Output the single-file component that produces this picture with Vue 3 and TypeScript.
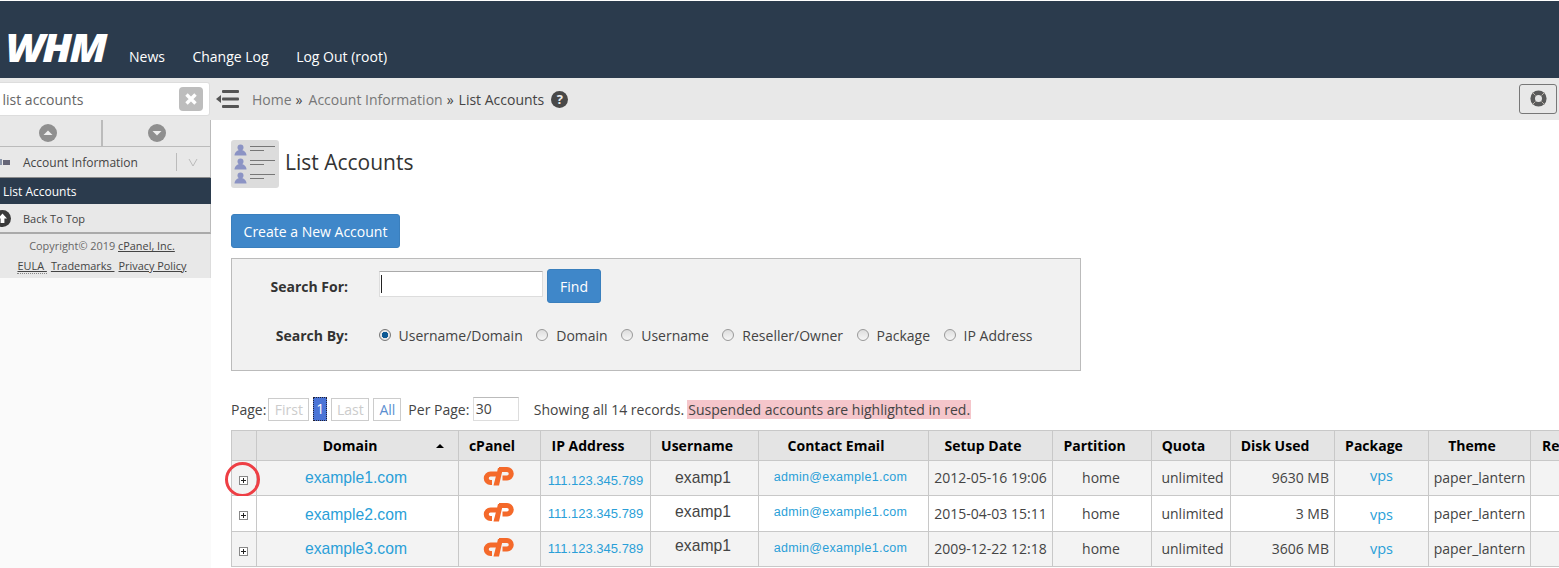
<script setup lang="ts">
interface Row {
  domain: string
  date: string
  disk: string
  h: number
  domainShift: number
  userShift: number
  ipShift: number
  pkgShift: number
}
const rows: Row[] = [
  { domain: 'example1.com', date: '2012-05-16 19:06', disk: '9630 MB', h: 35, domainShift: 0, userShift: -1, ipShift: 5, pkgShift: -6 },
  { domain: 'example2.com', date: '2015-04-03 15:11', disk: '3 MB', h: 36, domainShift: 3, userShift: -4, ipShift: 0, pkgShift: 2 },
  { domain: 'example3.com', date: '2009-12-22 12:18', disk: '3606 MB', h: 35, domainShift: 0, userShift: -6, ipShift: -1, pkgShift: -1 }
]
const widths = [25, 202, 82, 110, 108, 170, 124, 99, 79, 104, 94, 102, 70]
const tableWidth = widths.reduce((a, b) => a + b, 0)
const radios = ['Username/Domain', 'Domain', 'Username', 'Reseller/Owner', 'Package', 'IP Address']
function shift(n: number) {
  return n >= 0 ? { paddingTop: n + 'px' } : { paddingBottom: -n + 'px' }
}
</script>

<template>
  <div class="page">
    <header class="top">
      <div class="logo">WHM</div>
      <nav class="nav">
        <a>News</a>
        <a>Change Log</a>
        <a>Log Out (root)</a>
      </nav>
    </header>
    <div class="body">
      <aside class="side">
        <div class="side-search">
          <div class="search-box">
            <span>list accounts</span>
            <i class="clear">
              <svg width="14" height="14" viewBox="0 0 14 14"><path d="M2.5 2.5l9 9M11.5 2.5l-9 9" stroke="#fff" stroke-width="3.4" /></svg>
            </i>
          </div>
        </div>
        <div class="arrows">
          <div class="arrow-cell">
            <svg width="18" height="18" viewBox="0 0 18 18"><circle cx="9" cy="9" r="9" fill="#8f8f8f" /><path d="M4.5 11L9 6.5l4.5 4.5z" fill="#eee" /></svg>
          </div>
          <div class="arrow-cell">
            <svg width="18" height="18" viewBox="0 0 18 18"><circle cx="9" cy="9" r="9" fill="#8f8f8f" /><path d="M4.5 7L9 11.5 13.5 7z" fill="#eee" /></svg>
          </div>
        </div>
        <div class="group">
          <svg class="group-icon" width="11" height="8" viewBox="0 0 11 8"><rect y="1" width="3" height="6" fill="#8a94a8" /><rect x="4" y="2" width="7" height="5" fill="#667" /></svg>
          <span class="group-name">Account Information</span>
          <span class="group-sep"></span>
          <svg class="chev" width="10" height="9" viewBox="0 0 10 9"><path d="M1 1l4 7 4-7" fill="none" stroke="#bbb" stroke-width="1" /></svg>
        </div>
        <div class="active">List Accounts</div>
        <div class="back">
          <svg class="back-icon" width="17" height="17" viewBox="0 0 17 17"><circle cx="8.5" cy="8.5" r="8.5" fill="#3a3a3a" /><path d="M8.5 3.5l4.5 5h-2.6v4.500H6.600v-4.500H4z" fill="#fff" /></svg>
          <span>Back To Top</span>
        </div>
        <div class="legal">
          <div>Copyright© 2019 <u>cPanel, Inc.</u></div>
          <div class="legal-links"><u class="dotted">EULA&nbsp;</u><u>Trademarks&nbsp;</u><u>Privacy Policy</u></div>
        </div>
      </aside>
      <div class="content">
        <div class="crumbs">
          <svg class="collapse" width="24" height="18" viewBox="0 0 24 18">
            <path d="M0 9l5-4v8z" fill="#555" /><rect x="6" y="0" width="17" height="3" rx="1" fill="#555" /><rect x="6" y="7.500" width="17" height="3" rx="1" fill="#555" /><rect x="6" y="15" width="17" height="3" rx="1" fill="#555" />
          </svg>
          <span class="crumb-link">Home</span><span class="crumb-sep one">»</span>
          <span class="crumb-link">Account Information</span><span class="crumb-sep">»</span>
          <span class="crumb-now">List Accounts</span>
          <span class="help">?</span>
          <button class="ring-btn">
            <svg width="17" height="17" viewBox="0 0 17 17">
              <circle cx="8.500" cy="8.500" r="5.800" fill="#e4e4e4" stroke="#5a5a5a" stroke-width="4.600" />
              <path d="M2.500 2.500l3 3M14.500 2.500l-3 3M2.500 14.500l3-3M14.500 14.500l-3-3" stroke="#b9b3aa" stroke-width="1" />
            </svg>
          </button>
        </div>
        <main class="main">
          <div class="title-row">
            <svg class="title-icon" width="48" height="48" viewBox="0 0 48 48">
              <rect width="48" height="48" rx="3" fill="#dcdcdc" />
              <g v-for="y in [0, 14, 28]" :key="y" :transform="`translate(0 ${y})`">
                <circle cx="9.500" cy="7.500" r="3" fill="#8b93c4" />
                <path d="M3.500 15.500c0-3.500 3-5.500 6-5.500s6 2 6 5.500z" fill="#8b93c4" />
                <path d="M19 6.500h25M19 10.500h14" stroke="#777" stroke-width="1" />
              </g>
            </svg>
            <h1>List Accounts</h1>
          </div>
          <button class="btn create">Create a New Account</button>
          <section class="search">
            <div class="search-line first">
              <label class="lbl">Search For:</label>
              <input class="query" type="text" />
              <i class="caret"></i>
              <button class="btn find">Find</button>
            </div>
            <div class="search-line second">
              <label class="lbl">Search By:</label>
              <div class="radios">
                <span v-for="(r, i) in radios" :key="r" class="radio">
                  <i class="dot" :class="{ on: i === 0 }"></i>{{ r }}
                </span>
              </div>
            </div>
          </section>
          <div class="pager">
            <span>Page:</span>
            <span class="pg off first-pg">First</span>
            <span class="pg cur">1</span>
            <span class="pg off last-pg">Last</span>
            <span class="pg all">All</span>
            <span class="per">Per Page:</span>
            <span class="per-in">30</span>
            <span class="showing">Showing all 14 records.</span>
            <span class="susp">Suspended accounts are highlighted in red.</span>
          </div>
          <table class="accounts" :style="{ width: tableWidth + 'px' }">
            <colgroup>
              <col v-for="(w, i) in widths" :key="i" :style="{ width: w + 'px' }" />
            </colgroup>
            <thead>
              <tr>
                <th></th>
                <th class="th-domain">Domain<i class="sort"></i></th>
                <th>cPanel</th>
                <th>IP Address</th>
                <th>Username</th>
                <th>Contact Email</th>
                <th>Setup Date</th>
                <th>Partition</th>
                <th>Quota</th>
                <th>Disk Used</th>
                <th>Package</th>
                <th>Theme</th>
                <th class="th-re">Re</th>
              </tr>
            </thead>
            <tbody>
              <tr v-for="(r, i) in rows" :key="r.domain" :style="{ height: r.h + 'px' }">
                <td class="c-exp">
                  <i class="plus"></i>
                  <span v-if="i === 0" class="mark"></span>
                </td>
                <td class="arial lnk big dom" :style="shift(r.domainShift)">{{ r.domain }}</td>
                <td class="c-logo">
                  <svg width="31" height="19" viewBox="0 0 31 19">
                    <path d="M14 7H7.500A4.250 4.250 0 0 0 7.500 15.500H9" fill="none" stroke="#f4692a" stroke-width="5" />
                    <path d="M10.500 18.500L15 1h5L16 18.500z" fill="#f4692a" />
                    <path d="M16 2.500H24A4.250 4.250 0 0 1 24 11H19.500" fill="none" stroke="#f4692a" stroke-width="5" />
                  </svg>
                </td>
                <td class="arial lnk ip" :style="shift(r.ipShift)">111.123.345.789</td>
                <td class="arial big user" :style="shift(r.userShift)">examp1</td>
                <td class="arial lnk mail">admin@example1.com</td>
                <td class="plain">{{ r.date }}</td>
                <td class="plain home">home</td>
                <td class="plain quota">unlimited</td>
                <td class="plain num">{{ r.disk }}</td>
                <td class="lnk pkg" :style="shift(r.pkgShift)">vps</td>
                <td class="plain">paper_lantern</td>
                <td></td>
              </tr>
            </tbody>
          </table>
        </main>
      </div>
    </div>
  </div>
</template>

<style>
html, body { margin: 0; background: #fff; overflow: hidden; }
</style>

<style scoped>
.page {
  width: 1559px;
  height: 568px;
  overflow: hidden;
  display: flex;
  flex-direction: column;
  font-family: "Open Sans", "Liberation Sans", sans-serif;
  font-size: 14px;
  color: #333;
  background: #fff;
}
.top {
  height: 77px;
  margin-top: 1px;
  flex: none;
  background: #2b3b4d;
  display: flex;
  align-items: flex-end;
}
.logo {
  width: 129px;
  height: 51px;
  padding-left: 5px;
  box-sizing: border-box;
  font-family: "Open Sans", sans-serif;
  font-weight: 800;
  font-style: italic;
  font-size: 38px;
  line-height: 40px;
  letter-spacing: -2.200px;
  color: #fff;
  transform: scaleX(1.1);
  transform-origin: left center;
}
.nav {
  display: flex;
  gap: 27.500px;
  height: 31px;
  line-height: 20px;
  color: #fff;
}
.body {
  flex: 1;
  display: flex;
  min-height: 0;
}
.side {
  width: 211px;
  flex: none;
  background: #fafafa;
  font-size: 12px;
}
.side-search {
  height: 42px;
  background: #e8e8e8;
  padding: 4px 1px 4px 0;
  box-sizing: border-box;
}
.search-box {
  height: 34px;
  box-sizing: border-box;
  background: #fff;
  border: 1px solid #ddd;
  border-left: 0;
  border-radius: 0 3px 3px 0;
  display: flex;
  align-items: center;
  justify-content: space-between;
  padding: 0 6px 0 2.500px;
  font-size: 14px;
  color: #666;
}
.clear {
  width: 24px;
  height: 24px;
  background: #bdbdbd;
  border-radius: 4px;
  display: flex;
  align-items: center;
  justify-content: center;
}
.arrows {
  display: flex;
  height: 27px;
  background: #e8e8e8;
  border-bottom: 1px solid #bbb;
  border-right: 1px solid #bbb;
  box-sizing: border-box;
}
.arrow-cell {
  flex: 1;
  display: flex;
  align-items: center;
  justify-content: center;
}
.arrow-cell:first-child { border-right: 2px solid #bbb; flex: 0 0 103px; padding-right: 6px; box-sizing: border-box; }
.group {
  height: 31px;
  background: #e8e8e8;
  border-right: 1px solid #bbb;
  border-bottom: 1px solid #8b8b8b;
  box-sizing: border-box;
  display: flex;
  align-items: center;
  color: #444;
}
.group-icon { margin-left: -1px; }
.group-name { margin-left: 13px; width: 153px; }
.group-sep { width: 1px; height: 18px; background: #bbb; }
.chev { margin-left: 11px; }
.active {
  height: 26px;
  line-height: 28px;
  background: #2b3b4d;
  color: #fff;
  padding-left: 3px;
  font-size: 12px;
}
.back {
  height: 30px;
  background: #e8e8e8;
  border-right: 1px solid #bbb;
  border-bottom: 2px solid #aaa;
  box-sizing: border-box;
  display: flex;
  align-items: center;
  font-size: 11px;
  color: #444;
}
.back-icon { margin-left: -6px; }
.back span { margin-left: 12px; }
.legal {
  height: 44px;
  background: #e8e8e8;
  border-right: 1px solid #ddd;
  box-sizing: border-box;
  text-align: center;
  font-size: 10.900px;
  line-height: 20px;
  padding: 2px 6px 0 0;
  color: #666;
}
.legal u { color: #444; }
.legal-links { display: flex; justify-content: center; gap: 4px; }
.dotted { border-bottom: 1px dotted #888; line-height: 15px; height: 15px; margin-top: 2px; }
.content {
  flex: 1;
  min-width: 0;
  display: flex;
  flex-direction: column;
}
.crumbs {
  height: 42px;
  flex: none;
  background: #e8e8e8;
  display: flex;
  align-items: center;
  padding-left: 5px;
  white-space: nowrap;
}
.collapse { margin-right: 12px; }
.crumb-link { color: #777; }
.crumb-sep { color: #444; margin: 0 5px 0 4px; }
.crumb-sep.one { margin-right: 6px; }
.crumb-now { color: #444; }
.help {
  width: 17px;
  height: 17px;
  border-radius: 50%;
  background: #484848;
  color: #eee;
  font-weight: 700;
  font-size: 13px;
  line-height: 17px;
  text-align: center;
  margin-left: 7px;
}
.ring-btn {
  margin-left: auto;
  margin-right: 2px;
  margin-top: -1px;
  width: 38px;
  height: 30px;
  padding: 0;
  background: #e8e8e8;
  border: 1px solid #777;
  border-radius: 3px;
  display: flex;
  align-items: center;
  justify-content: center;
}
.main {
  padding: 20px 0 0 20px;
}
.title-row {
  display: flex;
  align-items: center;
  gap: 6px;
  height: 48px;
}
h1 {
  margin: 0 0 4px;
  font-weight: 400;
  font-size: 21px;
  color: #333;
}
.btn {
  font-family: inherit;
  font-size: 14px;
  color: #fff;
  background: #3f87c9;
  border: 1px solid #3a7fbd;
  border-radius: 3px;
  padding: 0;
}
.create {
  display: block;
  width: 169px;
  height: 34px;
  margin-top: 26px;
}
.search {
  width: 850px;
  height: 113px;
  margin-top: 10px;
  box-sizing: border-box;
  background: #f1f1f1;
  border: 1px solid #bbb;
}
.search-line { display: flex; align-items: center; }
.search-line.first { margin-top: 10px; height: 34px; }
.search-line.second { margin-top: 15px; height: 34px; }
.lbl {
  width: 116px;
  text-align: right;
  font-weight: 700;
  color: #333;
  margin-right: 30.500px;
}
.query {
  width: 164px;
  height: 26px;
  box-sizing: border-box;
  border: 1px solid #ddd;
  border-top-color: #aaa;
  background: #fff;
  padding: 0;
  margin-left: 0.500px;
  margin-bottom: 4px;
}
.caret {
  width: 1px;
  height: 18px;
  background: #222;
  margin: 0 161px 4px -162px;
}
.find { width: 54px; height: 34px; margin-left: 4px; }
.radios { display: flex; gap: 13.500px; }
.radio { display: flex; align-items: center; white-space: nowrap; color: #444; }
.dot {
  width: 12px;
  height: 12px;
  border-radius: 50%;
  box-sizing: border-box;
  border: 1px solid #999;
  background: linear-gradient(#ddd, #f6f6f6);
  margin-right: 8px;
}
.dot.on {
  background: radial-gradient(circle, #0f5a94 0 3px, #e8e8e8 3.500px);
  border-color: #777;
}
.pager {
  height: 24px;
  margin-top: 26px;
  display: flex;
  align-items: center;
  white-space: nowrap;
  color: #444;
}
.pg {
  height: 23px;
  box-sizing: border-box;
  border: 1px solid #ccc;
  line-height: 21px;
  text-align: center;
  margin-left: 4px;
}
.off { color: #ccc; }
.first-pg { width: 41px; margin-left: 2px; }
.last-pg { width: 38px; }
.cur {
  width: 14px;
  background: #4a74d6;
  color: #fff;
  height: 24px;
  border: 1px dotted #223;
}
.all { width: 28px; color: #5a8fd0; }
.per { margin-left: 7px; }
.per-in {
  width: 46px;
  height: 24px;
  box-sizing: border-box;
  border: 1px solid #ddd;
  border-top-color: #bbb;
  line-height: 22px;
  padding-left: 2px;
  margin-left: 3.500px;
}
.showing { margin-left: 15px; }
.susp { margin-left: 3px; background: #f5c6cb; padding: 0 1px; line-height: 19px; }
.accounts {
  table-layout: fixed;
  border-collapse: collapse;
  margin-top: 9px;
  border: 1px solid #c8c8c8;
}
th {
  height: 29px;
  padding: 0 15px 0 0;
  background: #e4e4e4;
  border: 1px solid #c8c8c8;
  color: #000;
  font-weight: 700;
  font-size: 14px;
  white-space: nowrap;
  overflow: hidden;
  text-align: center;
}
.th-domain { position: relative; }
.th-re { text-align: left; padding: 0 0 0 11px; }
.sort {
  position: absolute;
  right: 14px;
  top: 13px;
  border: 4px solid transparent;
  border-top: 0;
  border-bottom: 4px solid #000;
}
td {
  padding: 0;
  border: 1px solid #c8c8c8;
  text-align: center;
  vertical-align: middle;
  white-space: nowrap;
  color: #444;
  font-size: 14px;
}
tbody tr:nth-child(odd) td { background: #f3f3f3; }
tbody tr:nth-child(even) td { background: #fff; }
.arial { font-family: "Liberation Sans", Arial, sans-serif; }
.lnk { color: #2a9fd8; }
.big { font-size: 15.700px; }
.dom { padding-right: 3px; }
.user { padding-right: 3px; }
.ip { font-size: 13px; }
.mail { font-size: 12.500px; letter-spacing: 0.300px; padding: 0 6px 3px 0; }
.plain { padding-bottom: 1px; }
.home { padding-right: 2px; }
.quota { padding-left: 3px; }
.num { text-align: right; padding-right: 5px; }
.pkg { font-size: 14.500px; }
.c-exp { position: relative; padding: 4px 2px 0 0; }
.c-logo { padding-bottom: 3px; }
.c-logo svg { display: block; margin: 0 auto; position: relative; left: -1px; }
.plus {
  display: block;
  width: 7px;
  height: 7px;
  margin: 0 auto;
  border: 1px solid #888;
  background:
    linear-gradient(#222, #222) center / 5px 1px no-repeat,
    linear-gradient(#222, #222) center / 1px 5px no-repeat,
    #fff;
}
.mark {
  position: absolute;
  left: -7px;
  top: 1px;
  width: 35px;
  height: 35px;
  box-sizing: border-box;
  border: 3px solid #ee3f45;
  border-radius: 50%;
}
</style>
